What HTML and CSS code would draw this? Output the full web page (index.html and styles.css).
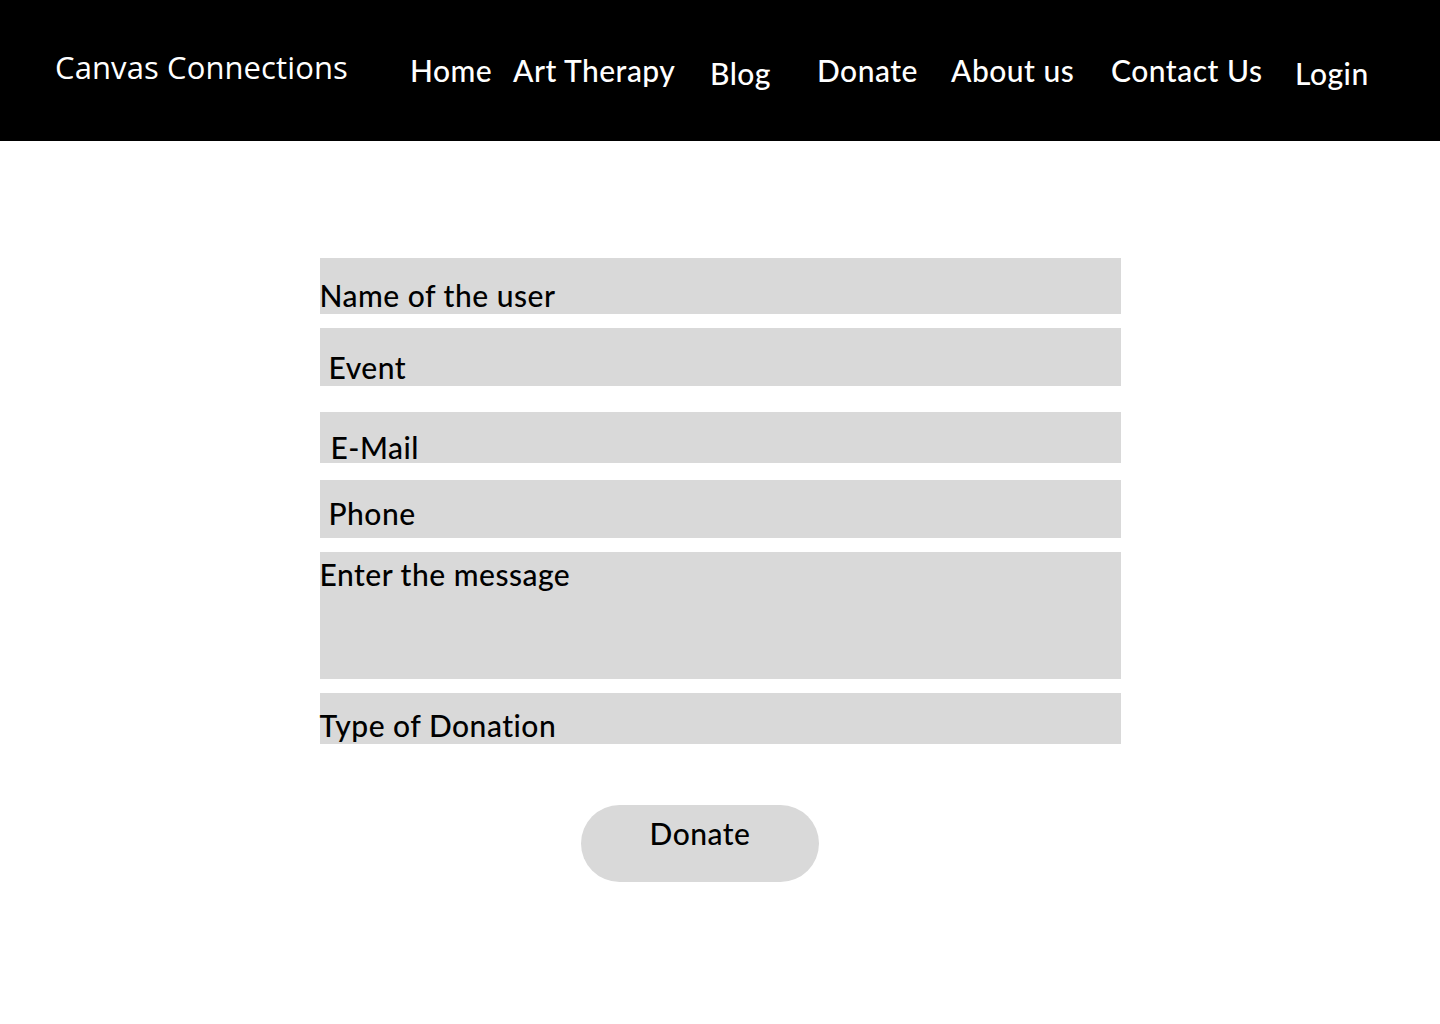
FILE: index.html
```html
<!DOCTYPE html>
<html lang="en">
<head>
<meta charset="utf-8">
<title>Canvas Connections – Donate</title>
<link rel="stylesheet" href="styles.css">
</head>
<body>
<header class="topbar">
  <div class="brand">Canvas Connections</div>
  <nav class="nav">
    <a class="nav-link w-home" href="#">Home</a>
    <a class="nav-link w-art" href="#">Art Therapy</a>
    <a class="nav-link w-blog low" href="#">Blog</a>
    <a class="nav-link w-donate" href="#">Donate</a>
    <a class="nav-link w-about" href="#">About us</a>
    <a class="nav-link w-contact" href="#">Contact Us</a>
    <a class="nav-link low" href="#">Login</a>
  </nav>
</header>
<main class="content">
  <form class="donate-form">
    <div class="field f-name">Name of the user</div>
    <div class="field f-event">Event</div>
    <div class="field f-email">E-Mail</div>
    <div class="field f-phone">Phone</div>
    <div class="field f-msg">Enter the message</div>
    <div class="field f-type">Type of Donation</div>
    <div class="actions">
      <button type="button" class="btn">Donate</button>
    </div>
  </form>
</main>
</body>
</html>
```
FILE: styles.css
```css
* { box-sizing: border-box; }
html, body { margin: 0; padding: 0; background: #fff; }
body { font-family: Lato, "Noto Sans", sans-serif; color: #000; }

.topbar {
  height: 141px;
  background: #000;
  display: flex;
  align-items: flex-start;
  padding: 0 0 0 55px;
}
.brand {
  font-family: "Open Sans", "Noto Sans", sans-serif;
  font-size: 31px;
  color: #fff;
  line-height: 1;
  padding-top: 52px;
  width: 355px;
  letter-spacing: 0.1px;
}
.nav {
  display: flex;
  align-items: flex-start;
  padding-top: 55px;
}
.nav-link {
  color: #fff;
  text-decoration: none;
  font-size: 30px;
  font-weight: 500;
  letter-spacing: 0.5px;
  line-height: 1;
  display: block;
}
.nav-link.low { padding-top: 3px; }
.w-home { width: 103px; }
.w-art { width: 197px; }
.w-blog { width: 107px; }
.w-donate { width: 134px; }
.w-about { width: 160px; }
.w-contact { width: 184px; }

.content { padding-top: 117px; }
.donate-form {
  width: 801px;
  margin: 0 auto;
  display: flex;
  flex-direction: column;
}
.field {
  background: #d9d9d9;
  font-size: 30px;
  font-weight: 500;
  letter-spacing: 0.5px;
  line-height: 1;
  display: flex;
  align-items: flex-end;
}
.f-name { height: 56px; padding-bottom: 4px; }
.f-event { height: 58px; margin-top: 14px; padding: 0 0 4px 9px; }
.f-email { height: 51px; margin-top: 26px; padding: 0 0 1px 11px; }
.f-phone { height: 58px; margin-top: 17px; padding: 0 0 10px 9px; }
.f-msg { height: 127px; margin-top: 14px; align-items: flex-start; padding-top: 7px; }
.f-type { height: 51px; margin-top: 14px; padding-bottom: 4px; }

.actions {
  display: flex;
  justify-content: center;
  padding-top: 61px;
  padding-right: 40px;
}
.btn {
  width: 238px;
  height: 77px;
  border: none;
  border-radius: 39px;
  background: #d9d9d9;
  font-family: Lato, "Noto Sans", sans-serif;
  font-size: 30px;
  font-weight: 500;
  letter-spacing: 0.5px;
  line-height: 1;
  color: #000;
  display: flex;
  justify-content: center;
  align-items: flex-start;
  padding: 13px 0 0 0;
}
```
